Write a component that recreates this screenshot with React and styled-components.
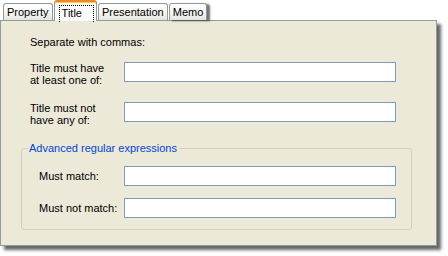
import React from "react";
import styled, { createGlobalStyle } from "styled-components";

const Global = createGlobalStyle`
  html, body { margin: 0; padding: 0; background: #ffffff; }
  body { font-family: "Liberation Sans", Arial, sans-serif; font-size: 11px; color: #000; }
  * { box-sizing: border-box; }
`;

const Window = styled.div`
  width: 448px;
  height: 256px;
  background: #ffffff;
  overflow: hidden;
`;

const TabStrip = styled.div`
  display: flex;
  align-items: flex-end;
  gap: 1px;
  height: 20px;
  padding-left: 3px;
  position: relative;
  z-index: 1;
`;

const Tab = styled.div`
  height: 17px;
  padding: 0 3px;
  display: flex;
  align-items: center;
  justify-content: center;
  line-height: 13px;
  border: 1px solid #919b9c;
  border-bottom: none;
  border-radius: 3px 3px 0 0;
  background: linear-gradient(#ffffff, #f3f3ef 60%, #e6e5de);
  white-space: nowrap;
  box-shadow: ${(p) => (p.$last ? "3px 1px 2px rgba(0,0,0,0.55)" : "none")};
`;

const ActiveTab = styled.div`
  height: 21px;
  margin-bottom: -1px;
  padding: 3px 2px 0 4px;
  display: flex;
  align-items: flex-start;
  border: 1px solid #919b9c;
  border-top: 2px solid #e68b2c;
  border-bottom: none;
  border-radius: 3px 3px 0 0;
  background: #fcfcfe;
  box-shadow: inset 0 1px 0 #ffc73c;
`;

const FocusLabel = styled.span`
  display: block;
  height: 17px;
  padding: 1px 11px 0 2px;
  border: 1px dotted #000;
  border-bottom: none;
  line-height: 13px;
`;

const Panel = styled.div`
  width: 437px;
  height: 226px;
  border: 1px solid #919b9c;
  background: #ece9d8;
  box-shadow: 4px 4px 3px rgba(0, 0, 0, 0.6);
  padding: 15px 0 0 20px;
`;

const Heading = styled.div`
  margin-left: 9px;
  line-height: 13px;
`;

const FormGrid = styled.div`
  display: grid;
  grid-template-columns: ${(p) => p.$label}px 272px;
  row-gap: ${(p) => p.$gap}px;
  margin: ${(p) => p.$margin};
  align-items: ${(p) => p.$align};
`;

const Label = styled.label`
  line-height: ${(p) => (p.$multi ? "12px" : "13px")};
  white-space: pre-line;
`;

const TextBox = styled.input`
  width: 272px;
  height: 20px;
  border: 1px solid #7f9db9;
  background: #ffffff;
  margin: 0;
  padding: 0 3px;
  font: inherit;
  outline: none;
`;

const Group = styled.fieldset`
  width: 391px;
  margin: 16px 0 0 0;
  padding: 11px 0 11px 6px;
  border: 1px solid #d0d0bf;
  border-radius: 3px;
`;

const Legend = styled.legend`
  padding: 0 2px 0 1px;
  color: #0046d5;
  line-height: 13px;
`;

export default function App() {
  return (
    <Window>
      <Global />
      <TabStrip>
        <Tab>Property</Tab>
        <ActiveTab>
          <FocusLabel>Title</FocusLabel>
        </ActiveTab>
        <Tab>Presentation</Tab>
        <Tab $last>Memo</Tab>
      </TabStrip>
      <Panel>
        <Heading>Separate with commas:</Heading>
        <FormGrid $label={94} $gap={16} $margin="13px 0 0 9px" $align="start">
          <Label $multi>{"Title must have\nat least one of:"}</Label>
          <TextBox />
          <Label $multi>{"Title must not\nhave any of:"}</Label>
          <TextBox />
        </FormGrid>
        <Group>
          <Legend>Advanced regular expressions</Legend>
          <FormGrid $label={85} $gap={12} $margin="0 0 0 11px" $align="center">
            <Label>Must match:</Label>
            <TextBox />
            <Label>Must not match:</Label>
            <TextBox />
          </FormGrid>
        </Group>
      </Panel>
    </Window>
  );
}
